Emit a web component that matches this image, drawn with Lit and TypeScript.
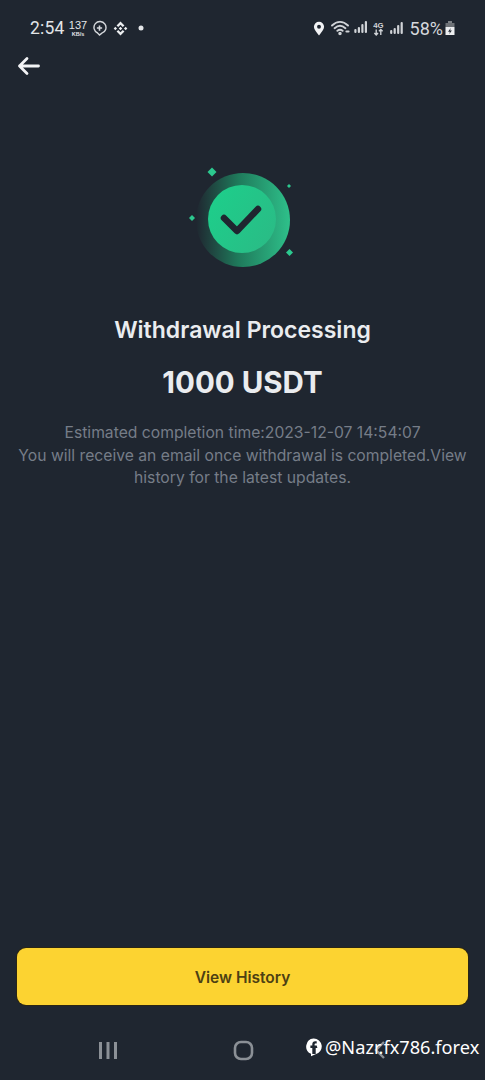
import { LitElement, html, css, svg } from 'lit'
import { customElement } from 'lit/decorators.js'

const signal = (x: number) => svg`
  <g fill="#d0d3d7">
    <rect x=${x} y="9" width="2.200" height="4" rx="1"></rect>
    <rect x=${x + 3.500} y="7" width="2.200" height="6" rx="1"></rect>
    <rect x=${x + 7} y="4" width="2.200" height="9" rx="1"></rect>
    <rect x=${x + 10.500} y="1" width="2.200" height="12" rx="1"></rect>
  </g>`

@customElement('app-root')
export class AppRoot extends LitElement {
  static styles = css`
    :host {
      display: block;
      width: 485px;
      height: 1080px;
      background: #1f2630;
      color: #eaecef;
      font-family: Inter, "Liberation Sans", sans-serif;
      overflow: hidden;
      position: relative;
    }
    .page {
      height: 1080px;
      display: flex;
      flex-direction: column;
    }
    .status {
      height: 56px;
      box-sizing: border-box;
      padding: 17px 29px 0 30px;
      display: flex;
      justify-content: space-between;
      align-items: flex-start;
      color: #e3e5e8;
    }
    .status-side {
      display: flex;
      align-items: center;
      height: 22px;
    }
    .time {
      font-family: Roboto, sans-serif;
      font-size: 17.500px;
      letter-spacing: 0.200px;
      width: 39px;
    }
    .speed {
      display: flex;
      flex-direction: column;
      align-items: center;
      width: 18px;
      font-family: "Liberation Sans", sans-serif;
      font-weight: 700;
    }
    .speed b { font-size: 11px; line-height: normal; font-weight: 400; }
    .speed i { font-size: 5.500px; line-height: normal; font-style: normal; }
    .ic-plus { margin-left: 5px; }
    .ic-binance { margin-left: 6px; }
    .ic-dot { margin-left: 10px; }
    .ic-wifi { margin-left: 6px; }
    .ic-4g { margin-left: 6px; }
    .ic-signal { margin-left: 6px; }
    .battery-text {
      font-family: Roboto, sans-serif;
      font-size: 18px;
      margin: 0 1px 0 7px;
      color: #d5d8dc;
    }
    .nav {
      height: 20px;
      padding-left: 17px;
      display: flex;
      align-items: center;
    }
    .hero {
      display: flex;
      justify-content: center;
      margin-top: 90px;
    }
    .title {
      margin: 37px 0 0;
      text-align: center;
      font-size: 23px;
      line-height: 30px;
      font-weight: 600;
      color: #eaecef;
    }
    .amount {
      margin-top: 17px;
      text-align: center;
      font-size: 29.500px;
      line-height: 40px;
      font-weight: 700;
      color: #eaecef;
    }
    .desc {
      margin: 20px 0 0;
      padding: 0 15px;
      text-align: center;
      font-size: 15.700px;
      line-height: 22.500px;
      color: #767d88;
    }
    .spacer { flex: 1; }
    .btn {
      margin: 0 17px;
      height: 57px;
      box-sizing: border-box;
      padding-top: 2px;
      border-radius: 9px;
      background: #fcd331;
      display: flex;
      align-items: center;
      justify-content: center;
      font-size: 15.500px;
      font-weight: 600;
      color: #4d4013;
      box-shadow: 0 0 0 1px #2b2614;
    }
    .softkeys {
      height: 75px;
      box-sizing: border-box;
      padding: 15px 0 0 98px;
      display: flex;
      align-items: center;
    }
    .key-home { margin-left: 115px; }
    .key-back { margin-left: 119px; }
    .mark {
      position: absolute;
      left: 305px;
      top: 1036px;
      display: flex;
      align-items: center;
      gap: 3px;
      font-family: "Noto Sans", sans-serif;
      font-size: 18.200px;
      line-height: 22px;
      color: #fff;
      white-space: nowrap;
    }
  `

  render () {
    return html`
      <div class="page">
        <div class="status">
          <div class="status-side">
            <span class="time">2:54</span>
            <span class="speed"><b>137</b><i>KB/s</i></span>
            <svg class="ic-plus" width="15" height="17" viewBox="0 0 16 18" fill="none" stroke="#d5d8dc" stroke-width="1.500">
              <path d="M8 16l-2-2.200A6.400 6.400 0 1 1 10.500 14z"></path>
              <path d="M5.200 8.500h5.600M8 5.700v5.600" stroke-width="1.700"></path>
            </svg>
            <svg class="ic-binance" width="15" height="15" viewBox="0 0 16 16" fill="#eceef0">
              <path d="M8 .5l4.200 4.200-1.800 1.800L8 4.100 5.600 6.500 3.800 4.700zM8 15.500l-4.200-4.200 1.800-1.800L8 11.900l2.400-2.400 1.800 1.800z"></path>
              <path d="M2.500 6.200L4.300 8 2.500 9.800 .7 8zM13.500 6.200L15.300 8l-1.800 1.800L11.700 8zM8 6.100L9.900 8 8 9.900 6.100 8z"></path>
            </svg>
            <svg class="ic-dot" width="6" height="6" viewBox="0 0 6 6" fill="#e3e5e8"><circle cx="3" cy="3" r="2.500"></circle></svg>
          </div>
          <div class="status-side">
            <svg width="12" height="15" viewBox="0 0 13 16" fill="#f2f3f5">
              <path fill-rule="evenodd" d="M6.500 15.500C3.600 11.800 1 9.400 1 6.200a5.500 5.500 0 0 1 11 0c0 3.200-2.600 5.600-5.500 9.300zM6.500 8.200a2.100 2.100 0 1 0 0-4.200 2.100 2.100 0 0 0 0 4.200z"></path>
            </svg>
            <svg class="ic-wifi" width="36" height="16" viewBox="0 0 36 16" fill="none" stroke="#d0d3d7" stroke-width="1.900" stroke-linecap="round">
              <path d="M1 5.500C6 .8 12 .8 17 5.500M3.600 8.200c3.600-3.200 7.200-3.200 10.800 0M6.400 10.800c2-1.600 3.200-1.600 5.200 0"></path>
              <circle cx="9" cy="13.600" r=".8" fill="#d0d3d7"></circle>
              <path d="M15.500 11.500l2 0" stroke-width="2.200"></path>
              <g stroke="none">${signal(23.300)}</g>
            </svg>
            <svg class="ic-4g" width="11" height="17" viewBox="0 0 12 17">
              <text x="6" y="7.500" text-anchor="middle" font-family="Liberation Sans" font-size="8.500" font-weight="700" fill="#d0d3d7">4G</text>
              <path d="M3.500 9.500v6M1.500 13.500l2 2 2-2M8.500 15.500v-6M6.500 11.500l2-2 2 2" fill="none" stroke="#d0d3d7" stroke-width="1.500"></path>
            </svg>
            <svg class="ic-signal" width="13" height="14" viewBox="0 0 13 14">${signal(0.100)}</svg>
            <span class="battery-text">58%</span>
            <svg width="12" height="16" viewBox="0 0 11 16">
              <path d="M3.500 1h4v2h-4z" fill="#7d8186"></path>
              <rect x="1" y="3" width="9" height="4" fill="#6d7176"></rect>
              <path fill-rule="evenodd" d="M1 7h9v8H1zM6.200 8L3.600 11.800h1.800L4.800 14l2.600-3.600H5.600z" fill="#eceef0"></path>
            </svg>
          </div>
        </div>
        <div class="nav">
          <svg width="24" height="20" viewBox="0 0 24 20" fill="none" stroke="#f2f3f5" stroke-width="2.800" stroke-linecap="round" stroke-linejoin="round">
            <path d="M2.500 10h19M10 2.500L2.500 10l7.500 7.500"></path>
          </svg>
        </div>
        <div class="hero">
          <svg width="112" height="112" viewBox="0 0 112 112">
            <defs>
              <linearGradient id="ring" x1="0" y1="0.5" x2="1" y2="0.5">
                <stop offset="0" stop-color="#1f2630"></stop>
                <stop offset="0.45" stop-color="#1f7a5b"></stop>
                <stop offset="1" stop-color="#2ec08a"></stop>
              </linearGradient>
              <linearGradient id="core" x1="0" y1="0" x2="1" y2="0.600">
                <stop offset="0" stop-color="#1cd08b"></stop>
                <stop offset="1" stop-color="#29bd86"></stop>
              </linearGradient>
            </defs>
            <circle cx="56" cy="54" r="47" fill="url(#ring)"></circle>
            <circle cx="55" cy="53" r="34" fill="url(#core)"></circle>
            <path d="M37 52l13 13 21-22" fill="none" stroke="#1f2630" stroke-width="6.500" stroke-linecap="round" stroke-linejoin="round"></path>
            <path d="M25 1.500l4.500 4.500L25 10.500 20.500 6z" fill="#2cc98f"></path>
            <path d="M5 49l3 3-3 3-3-3z" fill="#2cc98f"></path>
            <path d="M102 18l2 2-2 2-2-2z" fill="#2cc98f"></path>
            <path d="M102.500 83l3.500 3.500-3.500 3.500-3.500-3.500z" fill="#2cc98f"></path>
          </svg>
        </div>
        <h1 class="title">Withdrawal Processing</h1>
        <div class="amount">1000 USDT</div>
        <p class="desc">Estimated completion time:2023-12-07 14:54:07<br>You will receive an email once withdrawal is completed.View history for the latest updates.</p>
        <div class="spacer"></div>
        <div class="btn">View History</div>
        <div class="softkeys">
          <svg width="20" height="20" viewBox="0 0 20 20" fill="none" stroke="#8b9096" stroke-width="3">
            <path d="M2.500 2v17M10 2v17M17.500 2v17"></path>
          </svg>
          <svg class="key-home" width="21" height="21" viewBox="0 0 21 21" fill="none" stroke="#8b9096" stroke-width="2.600">
            <rect x="2" y="2" width="17" height="17" rx="6"></rect>
          </svg>
          <svg class="key-back" width="14" height="20" viewBox="0 0 14 20" fill="none" stroke="#8b9096" stroke-width="2.400">
            <path d="M11 2L3 10l8 8"></path>
          </svg>
        </div>
      </div>
      <div class="mark">
        <svg width="17" height="19" viewBox="0 0 17 19">
          <path fill="#fff" d="M8.500 .5a8 8 0 0 1 2 15.800l-4.500 2v-2.500A8 8 0 0 1 8.500 .5z"></path>
          <path fill="#1f2630" d="M7.300 16v-6H5.400V7.600h1.900V6.200c0-2 1.100-3 2.900-3l1.500.1v2.100h-1c-.9 0-1.100.4-1.100 1.100v1.100h2.100L12.400 10h-1.700v6z"></path>
        </svg>
        <span>@Nazr.fx786.forex</span>
      </div>
    `
  }
}
